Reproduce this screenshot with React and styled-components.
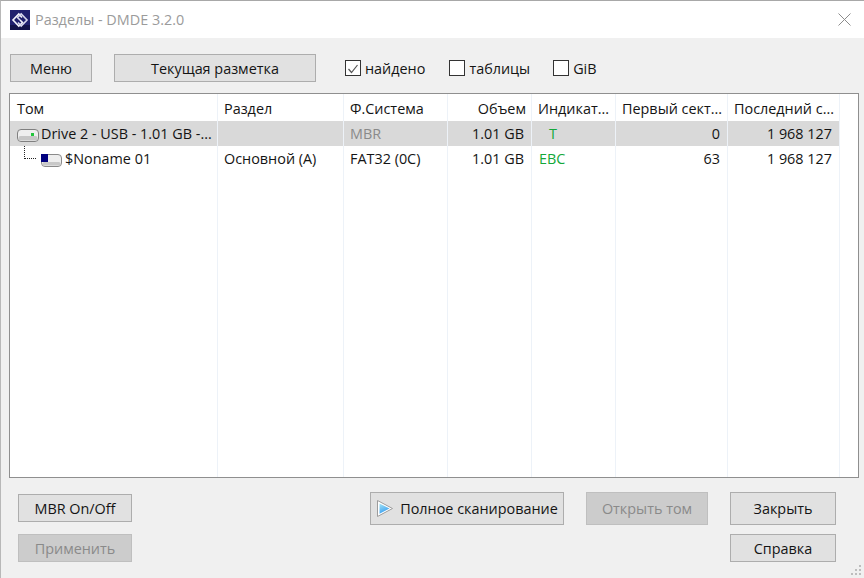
import styled, { createGlobalStyle } from "styled-components";

const GlobalStyle = createGlobalStyle`
  html, body {
    margin: 0;
    padding: 0;
    background: #f0f0f0;
  }
  body {
    font-family: "Open Sans", "Noto Sans", "Liberation Sans", sans-serif;
    font-size: 14.4px;
    color: #141414;
  }
`;

const Window = styled.div`
  position: relative;
  width: 864px;
  height: 578px;
  box-sizing: border-box;
  display: flex;
  flex-direction: column;
  background: #f0f0f0;
  border-top: 1px solid #a8a8a8;
  border-left: 1px solid #b8b8b8;
  overflow: hidden;
`;

const TitleBar = styled.div`
  height: 37px;
  flex: none;
  display: flex;
  align-items: center;
  padding: 0 13px 0 9px;
  background: #fff;
`;

const TitleText = styled.span`
  margin-left: 5px;
  font-size: 14.4px;
  color: #9b9b9b;
`;

const CloseIcon = styled.svg`
  margin-left: auto;
  width: 13px;
  height: 13px;
`;

const Toolbar = styled.div`
  height: 28px;
  flex: none;
  margin-top: 16px;
  padding-left: 9px;
  display: flex;
  align-items: center;
`;

const Button = styled.button`
  box-sizing: border-box;
  width: ${(p) => p.$w}px;
  height: ${(p) => p.$h || 28}px;
  margin-right: ${(p) => p.$mr || 0}px;
  padding: 0 0 0 ${(p) => p.$pl || 0}px;
  flex: none;
  display: flex;
  align-items: center;
  justify-content: center;
  gap: 7px;
  font: inherit;
  color: ${(p) => (p.disabled ? "#8a8a8a" : "#141414")};
  background: ${(p) => (p.disabled ? "#cccccc" : "#e1e1e1")};
  border: 1px solid ${(p) => (p.disabled ? "#bfbfbf" : "#adadad")};
  border-radius: 0;
`;

const CheckLabel = styled.label`
  display: flex;
  align-items: center;
  gap: 4px;
  margin-right: ${(p) => p.$mr}px;
`;

const CheckBox = styled.span`
  box-sizing: border-box;
  width: 16px;
  height: 16px;
  display: block;
  background: #fff;
  border: 1px solid #333;
`;

const TableFrame = styled.div`
  box-sizing: border-box;
  width: 850px;
  height: 385px;
  flex: none;
  margin: 11px 0 0 8px;
  display: flex;
  background: #fff;
  border: 1px solid #8f8f8f;
  overflow: hidden;
`;

const Column = styled.div`
  box-sizing: border-box;
  width: ${(p) => p.$w}px;
  flex: none;
  border-right: 1px solid #edf2f8;
`;

const HeaderCell = styled.div`
  box-sizing: border-box;
  height: 27px;
  line-height: 29px;
  padding: 0 ${(p) => (p.$right ? 5 : 6)}px 0 ${(p) => (p.$first ? 7 : 6)}px;
  text-align: ${(p) => (p.$right ? "right" : "left")};
  white-space: nowrap;
  overflow: hidden;
`;

const Cell = styled.div`
  position: relative;
  box-sizing: border-box;
  height: 25px;
  line-height: 24px;
  padding: 0 7px 0 ${(p) => p.$pl ?? 6}px;
  display: flex;
  align-items: center;
  justify-content: ${(p) => (p.$right ? "flex-end" : "flex-start")};
  gap: ${(p) => p.$gap || 0}px;
  white-space: nowrap;
  overflow: hidden;
  background: ${(p) => (p.$selected ? "#d9d9d9" : "transparent")};
  color: ${(p) => p.$color || "inherit"};
`;

const RowIcon = styled.svg`
  width: 24px;
  height: 18px;
  flex: none;
`;

const TreeSpacer = styled.span`
  width: 23px;
  flex: none;
`;

const TreeLine = styled.span`
  position: absolute;
  left: 14px;
  top: 0;
  width: 11px;
  height: 12px;
  border-left: 1px dotted #222;
  border-bottom: 1px dotted #222;
`;

const Footer = styled.div`
  flex: 1;
  padding: 14px 28px 0 17px;
  display: flex;
  align-items: flex-start;
`;

const ButtonStack = styled.div`
  display: flex;
  flex-direction: column;
  margin-top: ${(p) => p.$mt || 0}px;
  margin-right: ${(p) => p.$mr || 0}px;
  gap: ${(p) => p.$gap}px;
`;

const ButtonRow = styled.div`
  display: flex;
  margin-left: auto;
`;

const Grip = styled.svg`
  position: absolute;
  right: 2px;
  bottom: 2px;
  width: 12px;
  height: 12px;
`;

function LogoIcon() {
  return (
    <svg width="20" height="20" viewBox="0 0 20 20">
      <rect width="20" height="20" fill="#20206e" />
      <rect y="15" width="20" height="5" fill="#12124a" />
      <path d="M12 7.5 L8.8 4 L3 10 L8.8 16 L12.5 12.5 L10 10" fill="none" stroke="#f2f2fa" strokeWidth="1.6" />
      <path d="M8 12.5 L11.2 16 L17 10 L11.2 4 L7.5 7.5 L10 10" fill="none" stroke="#d6d6ec" strokeWidth="1.6" />
    </svg>
  );
}

function DriveIcon() {
  return (
    <RowIcon viewBox="0 0 24 18">
      <rect x="1.5" y="4.5" width="21" height="12" rx="3.5" fill="#eeeeee" stroke="#808080" />
      <rect x="2.5" y="11" width="19" height="4.5" rx="2" fill="#c6c6c6" />
      <rect x="15" y="8" width="3" height="3" fill="#22c63c" />
    </RowIcon>
  );
}

function PartitionIcon() {
  return (
    <RowIcon viewBox="0 0 24 18">
      <rect x="1.5" y="4.5" width="20" height="12" rx="3.5" fill="#eeeeee" stroke="#8a8a8a" />
      <rect x="2.5" y="12" width="18" height="3.5" rx="1.5" fill="#c8c8c8" />
      <rect x="1" y="4" width="7" height="8" fill="#00007f" />
    </RowIcon>
  );
}

function ScanIcon() {
  return (
    <svg width="16" height="17" viewBox="0 0 16 17">
      <defs>
        <linearGradient id="scanFill" x1="0" y1="0" x2="0.4" y2="1">
          <stop offset="0" stopColor="#a6e4f5" />
          <stop offset="1" stopColor="#3a9ff0" />
        </linearGradient>
      </defs>
      <path d="M0.5 0.5 L15.5 8.5 L0.5 16.5 Z" fill="#fff" stroke="#9c9c9c" />
      <path d="M2.5 3.5 L12.5 8.5 L2.5 13.8 Z" fill="url(#scanFill)" />
    </svg>
  );
}

const columns = [
  {
    w: 208,
    title: "Том",
    first: true,
    cells: [
      <>
        <DriveIcon />
        Drive 2 - USB - 1.01 GB -...
      </>,
      <>
        <TreeLine />
        <TreeSpacer />
        <PartitionIcon />
        $Noname 01
      </>,
    ],
  },
  { w: 126, title: "Раздел", cells: ["", "Основной (A)"] },
  { w: 104, title: "Ф.Система", cells: ["MBR", "FAT32 (0C)"], colors: ["#8a8a8a"] },
  { w: 84, title: "Объем", right: true, cells: ["1.01 GB", "1.01 GB"] },
  { w: 84, title: "Индикат...", cells: ["T", "EBC"], colors: ["#14a83a", "#14a83a"], pl: [17, 7] },
  { w: 112, title: "Первый сект...", right: true, cells: ["0", "63"] },
  { w: 112, title: "Последний с...", right: true, cells: ["1 968 127", "1 968 127"] },
];

export default function App() {
  return (
    <>
      <GlobalStyle />
      <Window>
        <TitleBar>
          <LogoIcon />
          <TitleText>Разделы - DMDE 3.2.0</TitleText>
          <CloseIcon viewBox="0 0 13 13">
            <path d="M0.5 0.5 L12.5 12.5 M12.5 0.5 L0.5 12.5" stroke="#8c8c8c" fill="none" />
          </CloseIcon>
        </TitleBar>

        <Toolbar>
          <Button $w={82} $mr={22}>Меню</Button>
          <Button $w={202} $mr={29}>Текущая разметка</Button>
          <CheckLabel $mr={24}>
            <CheckBox>
              <svg width="14" height="14" viewBox="0 0 14 14">
                <path d="M2.5 7 L5.5 10.5 L11.5 3" fill="none" stroke="#555" strokeWidth="1.2" />
              </svg>
            </CheckBox>
            найдено
          </CheckLabel>
          <CheckLabel $mr={23}>
            <CheckBox />
            таблицы
          </CheckLabel>
          <CheckLabel $mr={0}>
            <CheckBox />
            GiB
          </CheckLabel>
        </Toolbar>

        <TableFrame>
          {columns.map((col) => (
            <Column key={col.title} $w={col.w}>
              <HeaderCell $right={col.right} $first={col.first}>{col.title}</HeaderCell>
              {col.cells.map((cell, i) => (
                <Cell
                  key={i}
                  $selected={i === 0}
                  $right={col.right}
                  $color={col.colors && col.colors[i]}
                  $pl={col.first ? 6 : col.pl && col.pl[i]}
                  $gap={col.first ? 1 : 0}
                >
                  {cell}
                </Cell>
              ))}
            </Column>
          ))}
        </TableFrame>

        <Footer>
          <ButtonStack $gap={12} $mt={2}>
            <Button $w={114}>MBR On/Off</Button>
            <Button $w={114} disabled>Применить</Button>
          </ButtonStack>
          <ButtonRow>
            <Button $w={194} $h={33} $mr={22} $pl={1}>
              <ScanIcon />
              Полное сканирование
            </Button>
            <Button $w={122} $h={33} $mr={22} disabled>Открыть том</Button>
            <ButtonStack $gap={9}>
              <Button $w={106} $h={33}>Закрыть</Button>
              <Button $w={106}>Справка</Button>
            </ButtonStack>
          </ButtonRow>
        </Footer>

        <Grip viewBox="0 0 12 12">
          <g fill="#bdbdbd">
            <rect x="9" y="1" width="2" height="2" />
            <rect x="5" y="5" width="2" height="2" />
            <rect x="9" y="5" width="2" height="2" />
            <rect x="1" y="9" width="2" height="2" />
            <rect x="5" y="9" width="2" height="2" />
            <rect x="9" y="9" width="2" height="2" />
          </g>
        </Grip>
      </Window>
    </>
  );
}
